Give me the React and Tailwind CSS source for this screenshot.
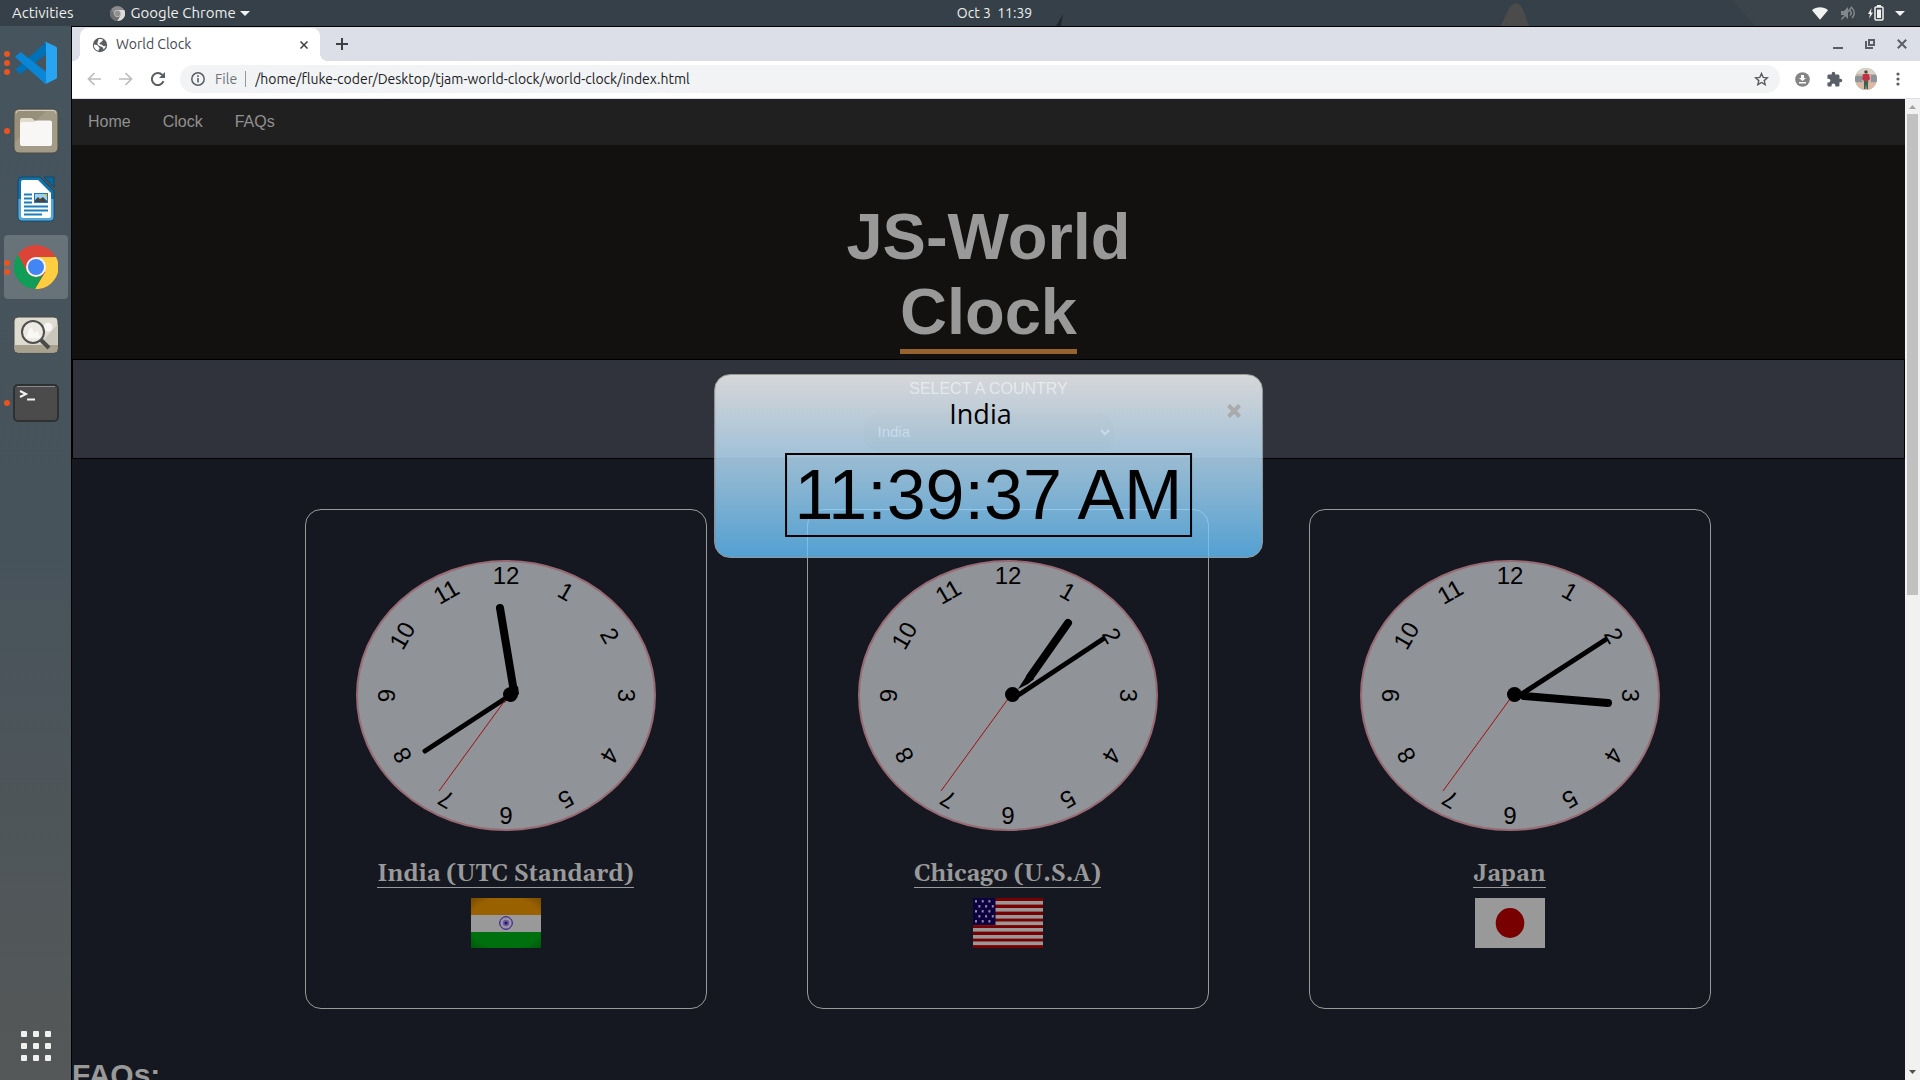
import React from "react";

const HOURS = [1, 2, 3, 4, 5, 6, 7, 8, 9, 10, 11, 12];

/* Each hand is [x1, y1, x2, y2] inside the 300 x 271 clock face. */
const CLOCKS = [
  {
    name: "India (UTC Standard)",
    hour: [158, 132, 144, 48],
    minute: [150, 138, 69, 191],
    wedges: ["154,132 162,126 163,134 156,140", "154,136 148,143 145,139"],
    Flag: IndiaFlag,
  },
  {
    name: "Chicago (U.S.A)",
    hour: [172, 117, 210, 63],
    minute: [162, 134, 245, 79],
    wedges: ["160,129 169,115 176,119 170,124"],
    Flag: UsaFlag,
  },
  {
    name: "Japan",
    hour: [164, 136, 248, 143],
    minute: [160, 135, 245, 80],
    wedges: [],
    Flag: JapanFlag,
  },
];

function IndiaFlag() {
  return (
    <svg width="70" height="50" viewBox="0 0 70 50" role="img" aria-label="Flag of India">
      <defs>
        <radialGradient id="flag-shade" cx="50%" cy="50%" r="72%">
          <stop offset="0.72" stopColor="#000" stopOpacity="0" />
          <stop offset="1" stopColor="#000" stopOpacity="0.25" />
        </radialGradient>
      </defs>
      <rect width="70" height="17" fill="#996100" />
      <rect y="17" width="70" height="17" fill="#999999" />
      <rect y="34" width="70" height="16" fill="#00700f" />
      <circle cx="35" cy="25" r="6.3" fill="#9a94a4" stroke="#28108a" strokeWidth="1" />
      <circle cx="35" cy="25" r="3.2" fill="#6c5c98" />
      <circle cx="35" cy="25" r="1.6" fill="#28108a" />
      <rect width="70" height="50" fill="url(#flag-shade)" />
    </svg>
  );
}

function UsaFlag() {
  const stars = [];
  for (let r = 0; r < 5; r++) {
    for (let c = 0; c < 3; c++) {
      stars.push([3 + c * 6.7 + (r % 2 ? 3.4 : 0), 3.3 + r * 5]);
    }
  }
  return (
    <svg width="70" height="50" viewBox="0 0 70 50" role="img" aria-label="Flag of the United States">
      <rect width="70" height="50" fill="#780000" />
      {[3, 10, 17, 23.5, 30, 37, 43.5].map((y) => (
        <rect key={y} y={y} width="70" height="3.6" fill="#999" />
      ))}
      <rect width="22.5" height="27" fill="#0c0040" />
      {stars.map(([x, y], i) => (
        <rect key={i} x={x - 1} y={y - 1.2} width="2" height="2.4" fill="#8e8c9c" />
      ))}
    </svg>
  );
}

function JapanFlag() {
  return (
    <svg width="70" height="50" viewBox="0 0 70 50" role="img" aria-label="Flag of Japan">
      <rect width="70" height="50" fill="#999" />
      <ellipse cx="35" cy="25" rx="14.3" ry="15" fill="#780000" />
    </svg>
  );
}

function Hand({ line, width, color, cap = "round" }) {
  const [x1, y1, x2, y2] = line;
  return <line x1={x1} y1={y1} x2={x2} y2={y2} stroke={color} strokeWidth={width} strokeLinecap={cap} />;
}

function ClockFace({ hour, minute, wedges }) {
  return (
    <svg width="300" height="271" viewBox="0 0 300 271" className="shrink-0">
      <ellipse cx="150" cy="135.5" rx="149" ry="134.5" fill="#909398" stroke="#986a73" strokeWidth="2" />
      <g fontSize="24" textAnchor="middle" fill="#000" className="font-['Liberation_Sans',Arial,sans-serif]">
        {HOURS.map((n) => (
          <text key={n} x="150" y="24" transform={`rotate(${n * 30} 150 135.5)`}>
            {n}
          </text>
        ))}
      </g>
      <Hand line={hour} width={8} color="#000" />
      <Hand line={minute} width={5} color="#000" />
      {wedges.map((p) => (
        <polygon key={p} points={p} fill="#000" />
      ))}
      <Hand line={[150, 139, 83, 231]} width={1} color="#a00f0f" cap="butt" />
      <circle cx="154.5" cy="134.5" r="7.5" fill="#000" />
    </svg>
  );
}

function ClockCard({ name, Flag, ...face }) {
  return (
    <li className="flex h-[500px] w-[402px] flex-col items-center rounded-2xl border border-[#999] pt-[50px]">
      <ClockFace {...face} />
      <h3 className="mt-[32px] mb-[10px] border-b border-[#999] font-['Gelasio',Georgia,'Noto_Serif',serif] text-[23px] leading-[24px] font-bold text-[#999]">
        {name}
      </h3>
      <Flag />
    </li>
  );
}

/* ---------- desktop shell ---------- */

function VsCodeIcon() {
  return (
    <svg width="44" height="44" viewBox="0 0 44 44">
      <path d="M1.5 28.2 32 1.2v12L7.6 32.4a1.6 1.6 0 0 1-2 0L1.7 29a1 1 0 0 1-.2-.8z" fill="#0070b7" />
      <path d="M1.7 15.3 5.6 11.700a1.600 1.600 0 0 1 2 0L32 30.800v11.600c-.9 0-1.700-.4-2.300-1L1.600 16.600a.9.9 0 0 1 .1-1.300z" fill="#0a86d6" />
      <path d="M32 1 41.800 5.600c.8.400 1.200 1 1.200 1.900v28.700c0 .9-.4 1.500-1.200 1.900L32 42.800c-1 .3-1.700 0-2-.4.900.5 2 0 2-1.200V2.400C32 1.300 31 .9 30 1.400c.5-.5 1.200-.7 2-.4z" fill="#28a5f2" />
    </svg>
  );
}

function FilesIcon() {
  return (
    <svg width="46" height="46" viewBox="0 0 46 46">
      <rect x="1" y="1" width="44" height="44" rx="5" fill="#a29b87" stroke="#4a4a42" />
      <path d="M2 34V6a4 4 0 0 1 4-4h28z" fill="#978f79" />
      <path d="M3 5.500a3 3 0 0 1 3-3h34a3 3 0 0 1 3 3" fill="none" stroke="#d5d0c2" />
      <path d="M7 20V12a2 2 0 0 1 2-2h9c2 0 3 3 5 3h14a2 2 0 0 1 2 2v6z" fill="#dfdbcd" />
      <path d="M7 16a2 2 0 0 1 2-2h11c2 0 2-1.500 4-1.500h13a2 2 0 0 1 2 2V36a2 2 0 0 1-2 2H9a2 2 0 0 1-2-2z" fill="#f8f7f5" />
    </svg>
  );
}

function WriterIcon() {
  return (
    <svg width="40" height="46" viewBox="0 0 40 46">
      <path d="M6 1h18l14 14v26a4 4 0 0 1-4 4H6a4 4 0 0 1-4-4V5a4 4 0 0 1 4-4z" fill="#1272a8" stroke="#0f4a6e" />
      <path d="M2.500 23h35v18a3.500 3.500 0 0 1-3.500 3.500H6A3.500 3.500 0 0 1 2.500 41z" fill="#55a8d6" />
      <path d="M7 4h15l13 13v23a2 2 0 0 1-2 2H7a2 2 0 0 1-2-2V6a2 2 0 0 1 2-2z" fill="#fff" />
      <path d="M28 1h10v10z" fill="#0e6696" stroke="#0f4a6e" />
      <path d="M8 18.500h8M8 22.500h8M8 26.500h8M8 30.500h24M8 34.500h24M8 38.500h18" stroke="#1a7fb8" strokeWidth="2" />
      <rect x="18.500" y="17.500" width="13" height="9" fill="#9fd2ee" stroke="#1a7fb8" />
      <path d="M19 26v-2l3-3 2 2 3-2 4 4v1z" fill="#444" />
      <path d="M28 18h3v3z" fill="#f4b800" />
    </svg>
  );
}

function ChromeIcon({ size, mono = false }) {
  const c = mono ? ["#8b8b8b", "#6e6e6e", "#dcdcdc", "#8f8f8f"] : ["#db4437", "#0f9d58", "#ffcd40", "#4285f4"];
  return (
    <svg width={size} height={size} viewBox="0 0 44 44">
      <circle cx="22" cy="22" r="22" fill={c[0]} />
      <path d="M22 12h20a22 22 0 0 1-21 32l10.300-17z" fill={c[2]} />
      <path d="M3.800 9.500A22 22 0 0 0 21 44l9.800-17.200A10 10 0 0 1 13.300 27z" fill={c[1]} />
      <circle cx="22" cy="22" r="10" fill={mono ? "#c4c4c4" : "#f4f4f4"} />
      <circle cx="22" cy="22" r="8" fill={c[3]} />
    </svg>
  );
}

function ViewerIcon() {
  return (
    <svg width="46" height="38" viewBox="0 0 46 38">
      <rect x="1" y="1" width="44" height="36" rx="4" fill="#dedcd0" stroke="#4a4a44" />
      <path d="M26 29 45 8v21z" fill="#c9c7bb" />
      <path d="M1.500 29h43v4a3.500 3.500 0 0 1-3.500 3.500H5A3.500 3.500 0 0 1 1.500 33z" fill="#a8a18d" />
      <circle cx="35" cy="11" r="4.500" fill="#f6f5f1" />
      <circle cx="20" cy="16" r="11" fill="#eceae2" stroke="#4f4f4f" strokeWidth="2" />
      <path d="M13 22c2-4 3-10 5-10s2 5 3 5 2-2 3-2 2 4 3 7z" fill="#f8f8f5" />
      <path d="m28 24 8 8" stroke="#4a4a4a" strokeWidth="4" />
    </svg>
  );
}

function TerminalIcon() {
  return (
    <svg width="46" height="38" viewBox="0 0 46 38">
      <rect x="1" y="1" width="44" height="36" rx="4" fill="#4b4b4b" stroke="#2d3132" strokeWidth="2" />
      <path d="M4 2.500h38" stroke="#8a8a8a" />
      <path d="m7 7 6 3-6 3" fill="none" stroke="#f2f2f2" strokeWidth="2" />
      <path d="M14 15.500h8" stroke="#f2f2f2" strokeWidth="2" />
    </svg>
  );
}

const DOCK = [
  { label: "Visual Studio Code", dots: 3, Icon: VsCodeIcon },
  { label: "Files", dots: 1, Icon: FilesIcon },
  { label: "LibreOffice Writer", dots: 0, Icon: WriterIcon },
  { label: "Google Chrome", dots: 2, active: true, Icon: () => <ChromeIcon size={44} /> },
  { label: "Image Viewer", dots: 0, Icon: ViewerIcon },
  { label: "Terminal", dots: 1, Icon: TerminalIcon },
];

function Dock() {
  return (
    <aside className="flex w-[71px] shrink-0 flex-col justify-between bg-linear-to-b from-[#46545d] via-[#47535b] to-[#555858] pt-[5px] pb-0.5 pl-1">
      <div className="flex flex-col gap-1">
        {DOCK.map(({ label, dots, active, Icon }) => (
          <button
            key={label}
            aria-label={label}
            className={`relative flex size-16 items-center justify-center rounded ${active ? "bg-[#687279]" : ""}`}
          >
            <span className="absolute inset-y-0 left-0 flex flex-col justify-center gap-[3px]">
              {Array.from({ length: dots }, (_, i) => (
                <i key={i} className="block size-1.5 rounded-full bg-[#e95420]" />
              ))}
            </span>
            <Icon />
          </button>
        ))}
      </div>
      <button aria-label="Show Applications" className="grid size-16 grid-cols-[repeat(3,6px)] place-content-center gap-1.5">
        {HOURS.slice(0, 9).map((n) => (
          <i key={n} className="size-1.5 rounded-[1px] bg-[#f0f0ee]" />
        ))}
      </button>
    </aside>
  );
}

function TopBar() {
  return (
    <header className="relative flex h-[26px] shrink-0 items-center bg-[#364048] text-[15px] leading-[20px] text-[#eceeee]">
      <svg className="absolute top-0 right-0" width="900" height="26" viewBox="0 0 900 26">
        <path d="M480 26c6-8 8-22 16-23 7 1 10 15 13 23z" fill="#4a4b4a" />
        <path d="M712 0h188v26H735z" fill="#3b444a" />
        <path d="m36 26 7-12-2 12z" fill="#23282b" />
      </svg>
      <div className="relative flex flex-1 items-center pl-3">
        <button className="mr-9">Activities</button>
        <button className="flex items-center">
          <ChromeIcon size={15} mono />
          <span className="ml-[6px]">Google Chrome</span>
          <svg className="ml-1" width="10" height="5" viewBox="0 0 10 5">
            <path d="M0 0h10L5 5z" fill="#f2f2f2" />
          </svg>
        </button>
      </div>
      <button className="relative ml-[72px] whitespace-pre text-[14px]">Oct 3  11:39</button>
      <div className="relative flex flex-1 items-center justify-end pr-[15px]">
        <svg width="16" height="13" viewBox="0 0 16 13">
          <path d="M0 3.200C4.600-.6 11.400-.6 16 3.200L8 12.800z" fill="#f2f2f2" />
        </svg>
        <svg className="ml-3" width="16" height="14" viewBox="0 0 16 14" fill="none" stroke="#82888b" strokeWidth="1.500">
          <path d="M1 5h3l4-4v12L4 9H1z" fill="#82888b" stroke="none" />
          <path d="M10 4.500c1.500 1.500 1.500 3.500 0 5M12 2c3 3 3 7 0 10M1.500 13.500 12 .8" />
        </svg>
        <svg className="ml-3" width="16" height="16" viewBox="0 0 16 16">
          <path d="M3.500 3 0 9h2l-.8 4.500L5 7.500H3z" fill="#f2f2f2" />
          <rect x="7" y="2" width="8" height="13" rx="1" fill="none" stroke="#f2f2f2" strokeWidth="1.500" />
          <rect x="9" y="0" width="4" height="2" fill="#f2f2f2" />
          <rect x="9" y="4.500" width="4" height="8.500" fill="#f2f2f2" />
        </svg>
        <svg className="ml-[11px]" width="10" height="5" viewBox="0 0 10 5">
          <path d="M0 0h10L5 5z" fill="#f2f2f2" />
        </svg>
      </div>
    </header>
  );
}

/* ---------- browser window ---------- */

function TabStrip() {
  return (
    <div className="flex h-[34px] shrink-0 items-end justify-between bg-[#dcdfe7]">
      <div className="flex items-end">
        <span className="size-2 bg-[radial-gradient(circle_at_0_0,#dcdfe7_8px,#fff_8px)]" />
        <div className="flex h-[33px] w-[240px] items-center rounded-t-lg bg-white pr-2.5 pl-3 text-[14px] text-[#45494d]">
          <svg width="16" height="16" viewBox="0 0 16 16">
            <circle cx="8" cy="8" r="7.200" fill="#5a5e63" />
            <path d="M2 7.500c2 .2 3.500.4 4 1.600.3 1 1.500 1 1.500 2.200 0 1-1 1-1 2.500C3.500 13 1.500 10.500 2 7.500zM6.500 2.300c2-.6 3.500-.2 4.500.5 0 1.200-1.200 1-1.500 2-.3 1-1.500.6-2 1.500-.4.700.3 1.200 1.500 1.200 1.600 0 1.500 1.700 3 1.700.8 0 1.300-.4 1.800-.6-.2 1.500-1 2.900-2.200 3.800-.4-1.200-.8-2.300-2-2.600C8 9.300 6 8.500 5.500 7 5 5.500 6.500 4 6.500 2.300z" fill="#fff" />
          </svg>
          <span className="ml-2 flex-1">World Clock</span>
          <button aria-label="Close tab" className="flex size-3 items-center justify-center">
            <svg width="8" height="8" viewBox="0 0 8 8" stroke="#3c4043" strokeWidth="1.500">
              <path d="m.5.5 7 7m0-7-7 7" />
            </svg>
          </button>
        </div>
        <span className="size-2 bg-[radial-gradient(circle_at_100%_0,#dcdfe7_8px,#fff_8px)]" />
        <button aria-label="New tab" className="mb-[3px] flex size-7 items-center justify-center">
          <svg width="12" height="12" viewBox="0 0 12 12" stroke="#3c4043" strokeWidth="2">
            <path d="M6 0v12M0 6h12" />
          </svg>
        </button>
      </div>
      <div className="flex items-center self-center pr-0.5">
        <button aria-label="Minimize" className="flex size-8 items-center justify-center">
          <svg width="10" height="10" viewBox="0 0 10 10">
            <path d="M0 8h10v2H0z" fill="#5a5e66" />
          </svg>
        </button>
        <button aria-label="Restore" className="flex size-8 items-center justify-center">
          <svg width="10" height="10" viewBox="0 0 10 10" fill="none" stroke="#5a5e66" strokeWidth="2">
            <path d="M4 1h5v5H4zM1 2v7h7" />
          </svg>
        </button>
        <button aria-label="Close" className="flex size-8 items-center justify-center">
          <svg width="10" height="10" viewBox="0 0 10 10" stroke="#5a5e66" strokeWidth="2">
            <path d="m.8.800 8.400 8.400m0-8.400L.8 9.200" />
          </svg>
        </button>
      </div>
    </div>
  );
}

function ToolButton({ label, children }) {
  return (
    <button aria-label={label} className="flex size-8 shrink-0 items-center justify-center">
      {children}
    </button>
  );
}

function Toolbar() {
  return (
    <div className="flex h-[38px] shrink-0 items-center border-b border-[#dcdfe7] bg-white px-1.5 pb-px text-[14px]">
      <ToolButton label="Back">
        <svg width="14" height="14" viewBox="0 0 14 14" fill="none" stroke="#babcbe" strokeWidth="1.700">
          <path d="M14 7H1.500M7.500 1l-6 6 6 6" />
        </svg>
      </ToolButton>
      <ToolButton label="Forward">
        <svg width="14" height="14" viewBox="0 0 14 14" fill="none" stroke="#babcbe" strokeWidth="1.700">
          <path d="M0 7h12.500M6.500 1l6 6-6 6" />
        </svg>
      </ToolButton>
      <ToolButton label="Reload">
        <svg width="14" height="14" viewBox="0 0 14 14">
          <path d="M12.500 9.200A6 6 0 1 1 11.300 3" fill="none" stroke="#5a5e63" strokeWidth="2" />
          <path d="M14 0v6H8z" fill="#5a5e63" />
        </svg>
      </ToolButton>
      <div className="mx-1.5 flex h-7 flex-1 items-center rounded-full bg-[#f1f3f4] pr-[11px] pl-[11px]">
        <svg width="14" height="14" viewBox="0 0 14 14">
          <circle cx="7" cy="7" r="6.200" fill="none" stroke="#5a5e63" strokeWidth="1.500" />
          <path d="M6.200 6h1.600v4.500H6.200zM6.200 3.300h1.600v1.600H6.200z" fill="#5a5e63" />
        </svg>
        <span className="ml-[10px] text-[#6f7377]">File</span>
        <span className="mr-[9px] ml-2 h-4 w-px bg-[#96999c]" />
        <input
          aria-label="Address"
          readOnly
          className="min-w-0 flex-1 bg-transparent text-[#202124] outline-none"
          value="/home/fluke-coder/Desktop/tjam-world-clock/world-clock/index.html"
        />
        <button aria-label="Bookmark this page">
          <svg width="15" height="14" viewBox="0 0 15 14" fill="none" stroke="#5a5e63" strokeWidth="1.400">
            <path d="m7.500 1.500 1.700 3.900 4.200.4-3.200 2.800 1 4.100-3.700-2.200-3.700 2.200 1-4.100L1.600 5.800l4.200-.4z" />
          </svg>
        </button>
      </div>
      <ToolButton label="Downloader">
        <svg width="15" height="15" viewBox="0 0 15 15">
          <circle cx="7.500" cy="7.500" r="7.300" fill="#858585" />
          <path d="M6 3h3v3h2L7.500 9 4 6h2zM4 10h7v1.500H4z" fill="#fff" />
        </svg>
      </ToolButton>
      <ToolButton label="Extensions">
        <svg width="17" height="17" viewBox="0 0 24 24" fill="#5a5e66">
          <path d="M20.500 11H19V7c0-1.100-.9-2-2-2h-4V3.500a2.500 2.500 0 0 0-5 0V5H4c-1.100 0-2 .9-2 2v3.800h1.500a2.700 2.700 0 0 1 0 5.400H2V20c0 1.100.9 2 2 2h3.800v-1.500a2.700 2.700 0 0 1 5.400 0V22H17c1.100 0 2-.9 2-2v-4h1.500a2.500 2.500 0 0 0 0-5z" />
        </svg>
      </ToolButton>
      <ToolButton label="Profile">
        <svg width="22" height="22" viewBox="0 0 22 22">
          <clipPath id="avatar">
            <circle cx="11" cy="11" r="11" />
          </clipPath>
          <g clipPath="url(#avatar)">
            <path d="M0 0h22v22H0z" fill="#c9b3a6" />
            <path d="M0 0h22v6H0z" fill="#d6d3c8" />
            <path d="M0 8h7v6H0zM16 7h6v7h-6z" fill="#8d949c" />
            <path d="M0 15h22v7H0z" fill="#dcb9a4" />
            <path d="M8 6h6l1 5-2 2H9l-2-2z" fill="#c23243" />
            <path d="M9 13h4v8h-1.500l-.5-5-.5 5H9z" fill="#35654f" />
            <circle cx="11" cy="4" r="1.800" fill="#5b463c" />
          </g>
        </svg>
      </ToolButton>
      <ToolButton label="Menu">
        <svg width="4" height="14" viewBox="0 0 4 14" fill="#5a5e63">
          <circle cx="2" cy="2" r="1.600" />
          <circle cx="2" cy="7" r="1.600" />
          <circle cx="2" cy="12" r="1.600" />
        </svg>
      </ToolButton>
    </div>
  );
}

function Scrollbar() {
  return (
    <div className="flex w-[15px] shrink-0 flex-col items-center bg-[#f1f1f1]">
      <svg className="shrink-0" width="15" height="15" viewBox="0 0 15 15">
        <path d="M4 10h7L7.500 6z" fill="#a3a3a3" />
      </svg>
      <div className="h-[49%] w-[11px] bg-[#c1c1c1]" />
      <svg className="mt-auto shrink-0" width="15" height="15" viewBox="0 0 15 15">
        <path d="M4 5h7L7.500 9z" fill="#505050" />
      </svg>
    </div>
  );
}

function TimeModal() {
  return (
    <div
      role="dialog"
      aria-label="India time"
      className="absolute top-[275px] left-1/2 w-[30%] -translate-x-1/2 rounded-2xl border border-[#999] bg-linear-to-b from-[rgba(255,255,255,0.8)] to-[rgba(97,194,255,0.8)] p-5 text-black"
    >
      <div className="mb-5 flex h-[38px]">
        <h2 className="flex-1 text-center font-['Open_Sans',sans-serif] text-[27px] leading-[38px]">India</h2>
        <button aria-label="Close" className="flex h-8 w-4 items-center justify-center">
          <svg width="14" height="14" viewBox="0 0 14 14" stroke="#aaa" strokeWidth="4">
            <path d="m1.500 1.500 11 11m0-11-11 11" />
          </svg>
        </button>
      </div>
      <div className="flex justify-center">
        <time className="border-2 border-black px-2 text-[70px] leading-[80px] whitespace-nowrap">11:39:37 AM</time>
      </div>
    </div>
  );
}

function Page() {
  return (
    <div className="relative min-w-0 flex-1 overflow-hidden bg-[#151820] font-['Liberation_Sans',Arial,sans-serif] text-[#999]">
      <nav className="flex h-[46px] items-center bg-[#202020] text-base text-[#919191]">
        {["Home", "Clock", "FAQs"].map((item) => (
          <a key={item} href={`#${item}`} className="px-4">
            {item}
          </a>
        ))}
      </nav>
      <div className="bg-[#12110f] pt-[54px] pb-[5px] text-center">
        <h1 className="flex flex-col items-center text-[65px] leading-[75px] font-bold">
          <span>JS-World</span>
          <span className="border-b-5 border-[#96622d]">Clock</span>
        </h1>
      </div>
      <section className="flex h-[100px] flex-col items-center border border-black bg-[#30333b] pt-5">
        <label htmlFor="country" className="text-base leading-[18px] text-[#a3a5a8]">
          SELECT A COUNTRY
        </label>
        <div className="relative mt-[15px]">
          <select
            id="country"
            className="h-[38px] w-[250px] appearance-none rounded-2xl bg-[#26292f] pl-3.5 text-[15px] text-[#999]"
          >
            <option>India</option>
          </select>
          <svg className="pointer-events-none absolute top-4 right-1" width="10" height="7" viewBox="0 0 10 7" fill="none" stroke="#999" strokeWidth="2">
            <path d="m1 1 4 4 4-4" />
          </svg>
        </div>
      </section>
      <ul className="my-[50px] flex justify-center gap-[100px] pl-[38px]">
        {CLOCKS.map((clock) => (
          <ClockCard key={clock.name} {...clock} />
        ))}
      </ul>
      <h2 className="text-[30px] leading-8 font-bold">FAQs:</h2>
      <TimeModal />
    </div>
  );
}

export default function App() {
  return (
    <div className="flex h-screen flex-col overflow-hidden bg-black font-['Ubuntu','Open_Sans',sans-serif]">
      <TopBar />
      <div className="flex min-h-0 flex-1">
        <Dock />
        <main className="flex min-w-0 flex-1 flex-col border-t border-l border-black">
          <TabStrip />
          <Toolbar />
          <div className="flex min-h-0 flex-1">
            <Page />
            <Scrollbar />
          </div>
        </main>
      </div>
    </div>
  );
}
